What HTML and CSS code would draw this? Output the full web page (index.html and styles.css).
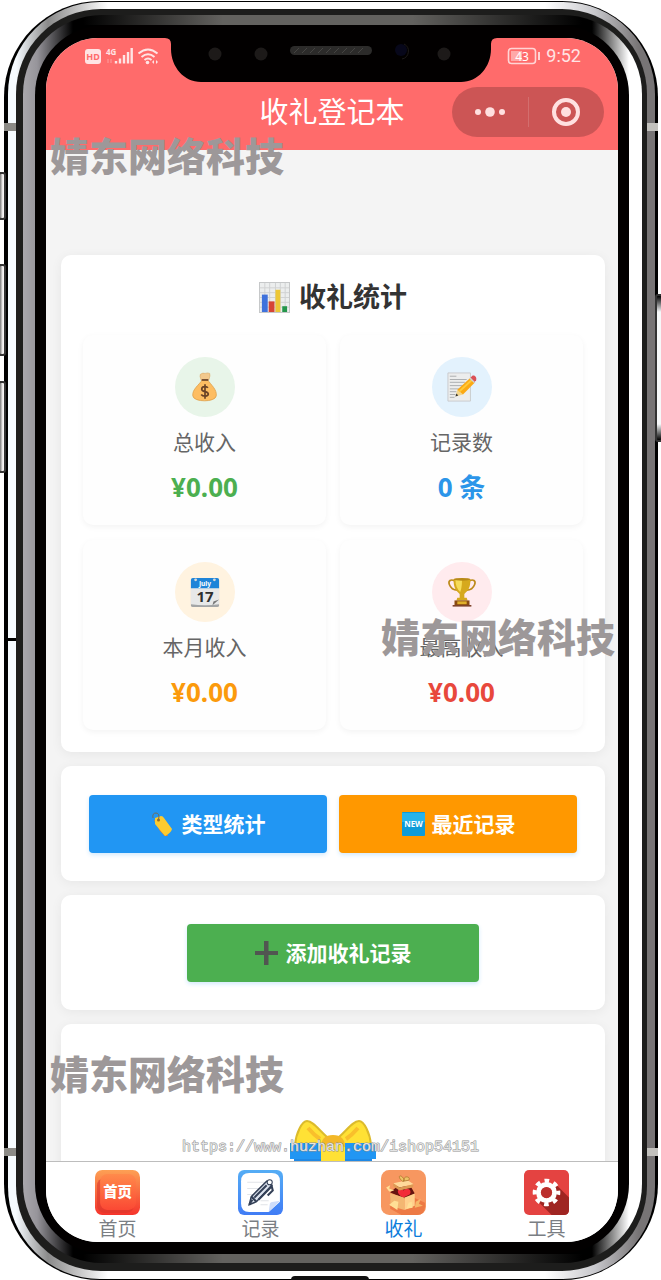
FILE: index.html
```
<!DOCTYPE html>
<html lang="zh-CN">
<head>
<meta charset="UTF-8">
<meta name="viewport" content="width=device-width, initial-scale=1">
<title>收礼登记本</title>
<link rel="stylesheet" href="styles.css">
</head>
<body>
<div class="stage">
  <div class="phone">
  <div class="rim">
  <div class="rim-dark">
  <div class="glass">
  <div class="bezel">
    <div class="screen">
      <header class="header">
        <div class="status">
          <svg class="status-left" viewBox="0 0 76 18">
            <rect x="1" y="2" width="16" height="15" rx="3" fill="#ffe4e4"/>
            <text x="9" y="13" font-size="9" font-weight="700" text-anchor="middle" fill="#ff6b6b">HD</text>
            <text x="22" y="8" font-size="8" font-weight="700" fill="#ffe4e4">4G</text>
            <path d="M24 12v4M27 12v4" stroke="#ffa0a0"/>
            <path d="M32 14v2.500M36 11.500v5M40 8v8.500M44 5v11.500M47.700 1v15.500" stroke="#ffe4e4" stroke-width="2.400"/>
            <path d="M54.500 6.500q9.500-8 19 0M57.500 10q6.500-5.500 13 0M60.500 13q3.500-3 7 0" fill="none" stroke="#ffe4e4" stroke-width="2"/>
            <circle cx="63.500" cy="15.500" r="1.800" fill="#ffe4e4"/>
            <path d="M68 15l2-2v4zM74 15l-2-2v4z" fill="#ffe4e4"/>
          </svg>
          <div class="status-right">
            <svg class="battery" viewBox="0 0 34 18">
              <rect x="1.500" y="1.500" width="27" height="15" rx="3" fill="none" stroke="#ffd5d5" stroke-width="1.600"/>
              <rect x="4" y="4" width="11" height="10" fill="#ffa8a8"/>
              <text x="15" y="13.500" font-size="12" text-anchor="middle" fill="#fff">43</text>
              <path d="M32 5v8" stroke="#ffd5d5" stroke-width="2"/>
            </svg>
            <span class="time">9:52</span>
          </div>
        </div>
        <div class="nav">
          <h1 class="nav-title">收礼登记本</h1>
          <div class="capsule">
            <button class="capsule-btn" aria-label="更多">
              <svg viewBox="0 0 32 12" width="32" height="12"><g fill="#ffe0e0"><circle cx="4" cy="6" r="3"/><circle cx="16" cy="6" r="4.800"/><circle cx="28" cy="6" r="3"/></g></svg>
            </button>
            <button class="capsule-btn" aria-label="关闭">
              <svg viewBox="0 0 30 30" width="30" height="30"><circle cx="15" cy="15" r="12" fill="none" stroke="#ffe0e0" stroke-width="4"/><circle cx="15" cy="15" r="5" fill="#ffe0e0"/></svg>
            </button>
          </div>
        </div>
      </header>
      <svg class="notch" viewBox="0 0 332 44">
        <path d="M0 0Q6 0 6 6v5c0 18 13 33 30 33h260c17 0 30-15 30-33V6q0-6 6-6z" fill="#020000"/>
        <g fill="#1d1a19"><circle cx="50" cy="16" r="6.500"/><circle cx="96" cy="16" r="6.500"/><circle cx="279" cy="16" r="6.500"/></g>
        <rect x="125" y="8" width="82" height="9" rx="4.500" fill="#2c2b2a"/>
        <path d="M129 15l5-5M137 15l5-5M145 15l5-5M153 15l5-5M161 15l5-5M169 15l5-5M177 15l5-5M185 15l5-5M193 15l5-5" stroke="#454442"/>
        <path d="M239 6a8 8 0 0 1-2 15" stroke="#1d1a19" fill="none"/>
        <circle cx="236" cy="12" r="6" fill="#07071a"/>
      </svg>

      <main class="main">
        <section class="card card-stats">
          <h2 class="card-title">
            <svg class="title-icon" viewBox="0 0 32 32">
              <rect x=".5" y=".5" width="31" height="31" fill="#eceeee" stroke="#c5c7c8"/>
              <path d="M1 6h30M1 11h30M1 16h30M1 21h30M1 26h30M6 1v30M11 1v30M17 1v30M22 1v30M27 1v30" stroke="#cfd2d3"/>
              <path d="M3 13h6v18H3z" fill="#3f72dc"/>
              <path d="M10 20h6v11h-6z" fill="#d64535"/>
              <path d="M17 8h5v23h-5z" fill="#edc735"/>
              <path d="M24 25h5v6h-5z" fill="#24964b"/>
            </svg>
            收礼统计
          </h2>
          <div class="stats">
            <div class="stat green">
              <div class="stat-icon">
                <svg viewBox="0 0 32 32">
                  <path d="M12 9Q10 4 11 2.500q3-2 5-1 3-1 5 0 1 2-1 7z" fill="#f3c98d" stroke="#d9a561" stroke-width=".6"/>
                  <path d="M13 8.500h6c3 5 10 10 9 17-1 7-24 7-25 0-1-7 7-12 10-17z" fill="#fdbd62" stroke="#dc9d48" stroke-width=".8"/>
                  <path d="M12.500 8.500h7" stroke="#69442c" stroke-width="1.800"/>
                  <path d="M19 17c-1-2-6.500-2-6.500 1.300 0 3.200 7 2 7 5.200 0 2.800-6 2.800-7.500.5M16 13v15.500" fill="none" stroke="#6b4327" stroke-width="1.800"/>
                </svg>
              </div>
              <div class="stat-label">总收入</div>
              <div class="stat-value">¥0.00</div>
            </div>
            <div class="stat blue">
              <div class="stat-icon">
                <svg viewBox="0 0 32 32">
                  <path d="M1 1h24v30H1z" fill="#eceded" stroke="#c9cbcc"/>
                  <path d="M3 4.500h7M3 8h18M3 11h16M3 14.500h14M3 18h12M3 21h7M3 24h6M3 27h5" stroke="#a9acae"/>
                  <path d="M9 26l2-7 6 5z" fill="#f3d68c"/>
                  <path d="M9 26l1-3 2 2z" fill="#333"/>
                  <path d="M11 19L25 6l5 5-13 13z" fill="#fba914"/>
                  <path d="M13 21L27 8" stroke="#ffca3a" stroke-width="2"/>
                  <path d="M25 6l2-2c3-1 5 2 4 5l-2 2z" fill="#db5157"/>
                  <path d="M24.500 6.500l5 5" stroke="#cfd2d4" stroke-width="1.500"/>
                </svg>
              </div>
              <div class="stat-label">记录数</div>
              <div class="stat-value">0 条</div>
            </div>
            <div class="stat orange">
              <div class="stat-icon">
                <svg viewBox="0 0 32 32">
                  <rect x="1" y="2" width="30" height="30" rx="2" fill="#a3a5a6"/>
                  <path d="M1 11h30v18q-15 2-30 0z" fill="#e7e8e8"/>
                  <path d="M1 12V3q0-2 2-2h26q2 0 2 2v9z" fill="#1e84d8"/>
                  <circle cx="6" cy="3" r="1.500" fill="#d5d9db"/><circle cx="26" cy="3" r="1.500" fill="#d5d9db"/>
                  <text x="16" y="9.500" font-size="7" font-weight="700" text-anchor="middle" fill="#fff">July</text>
                  <text x="16" y="27" font-size="16" font-weight="700" text-anchor="middle" fill="#2f2f2f">17</text>
                  <path d="M24 30l1-4 6-2z" fill="#777"/>
                </svg>
              </div>
              <div class="stat-label">本月收入</div>
              <div class="stat-value">¥0.00</div>
            </div>
            <div class="stat red">
              <div class="stat-icon">
                <svg viewBox="0 0 32 32">
                  <path d="M8 4C4 2 1 4 2.500 8s5 6 8.500 6M24 4c4-2 7 0 5.500 4s-5 6-8.500 6" fill="none" stroke="#bd8b1b" stroke-width="1.800"/>
                  <path d="M7 2h18c0 9-2 12-6.500 16v4h2.500l1 3H10l1-3h2.500v-4C9 14 7 11 7 2z" fill="#d6a91d"/>
                  <path d="M9 3h7c0 7-1 11-2 13-3-3-5-7-5-13z" fill="#f6dc58"/>
                  <ellipse cx="16" cy="2.500" rx="9" ry="1.500" fill="#b88a17"/>
                  <path d="M8 25h16v5H8z" fill="#8a4a12"/>
                  <path d="M11 26h10v3H11z" fill="#e0b02b"/>
                  <path d="M6 30h20v1.500H6z" fill="#6d2d10"/>
                </svg>
              </div>
              <div class="stat-label">最高收入</div>
              <div class="stat-value">¥0.00</div>
            </div>
          </div>
        </section>

        <section class="card card-actions">
          <button class="btn btn-blue">
            <svg class="btn-icon" viewBox="0 0 24 24">
              <path d="M3 8l6 11 5 5h3l-8-14z" fill="#f07c1c"/>
              <path d="M4 6l6-2q2 0 3 2l8 11q-1 4-7 7L4 12z" fill="#fccb2f"/>
              <circle cx="7.500" cy="8" r="1.500" fill="#9a6a1c"/>
              <path d="M7.500 8Q9 1 5 1T2 6" fill="none" stroke="#6e6d5c"/>
            </svg>
            类型统计
          </button>
          <button class="btn btn-orange">
            <svg class="btn-icon" viewBox="0 0 24 24">
              <rect x="1" width="23" height="24" rx="1" fill="#0d9bd8"/>
              <path d="M1 1h23v9H1z" fill="#27b3ea"/>
              <text x="12.500" y="15" font-size="8" font-weight="700" text-anchor="middle" fill="#fff">NEW</text>
            </svg>
            最近记录
          </button>
        </section>

        <section class="card card-add">
          <button class="btn btn-green">
            <svg class="btn-icon" viewBox="0 0 24 24"><path d="M10 0h4.500v10H24v4h-9.500v10H10V14H1v-4h9z" fill="#515651"/></svg>
            添加收礼记录
          </button>
        </section>

        <section class="card card-empty">
          <svg class="gift" viewBox="0 0 90 90">
            <g fill="#ffe135" stroke="#dcbb2c" stroke-width="2">
              <path d="M7 26C8 14 14 2 19 2c6 0 12 9 20 16v8z"/>
              <path d="M83 26C82 14 76 2 71 2c-6 0-12 9-20 16v8z"/>
            </g>
            <path d="M20 9q6 7 12 11M70 9q-6 7-12 11" fill="none" stroke="#f9bf2b" stroke-width="4"/>
            <path d="M2 24h86v16H2z" fill="#2196f3"/>
            <path d="M6 40h78v48H6z" fill="#1e88e5"/>
            <path d="M33 24h24v64H33z" fill="#ffe135"/>
            <path d="M33 28q0-12 12-12t12 12q-12-6-24 0z" fill="#f3b828"/>
          </svg>
        </section>
      </main>

      <nav class="tabbar">
        <a class="tab" href="#home">
          <svg class="tab-icon" viewBox="0 0 44 44">
            <defs>
              <linearGradient id="gh" x2="0" y2="1"><stop stop-color="#fda054"/><stop offset="1" stop-color="#f5342c"/></linearGradient>
              <linearGradient id="gi" x2="0" y2="1"><stop stop-color="#ff8a4b"/><stop offset="1" stop-color="#fb4934"/></linearGradient>
            </defs>
            <rect width="44" height="44" rx="7" fill="url(#gh)"/>
            <rect x="2" y="8" width="36" height="34" rx="7" fill="#d8362b" opacity=".6"/>
            <rect x="5" y="4" width="35" height="35" rx="7" fill="url(#gi)"/>
            <text class="tab-glyph" x="22" y="26" font-size="14" text-anchor="middle" fill="#fff">首页</text>
          </svg>
          首页
        </a>
        <a class="tab" href="#records">
          <svg class="tab-icon" viewBox="0 0 44 44">
            <defs><linearGradient id="gr" x2="0" y2="1"><stop stop-color="#55adf5"/><stop offset="1" stop-color="#407cf5"/></linearGradient></defs>
            <rect width="44" height="44" rx="6" fill="url(#gr)"/>
            <path d="M11 3h22q8 0 8 8v20L30 41H11q-8 0-8-8V11q0-8 8-8z" fill="#fff"/>
            <path d="M41 30L30 41l1-7q0-3 4-3z" fill="#cddcfa"/>
            <path d="M9 12h18M9 18h12M9 24h7M22 30h8M22 34h7" stroke="#e1e4e8"/>
            <path d="M11 34l2-8 15-15 5 4-15 16z" fill="#dce3ee" stroke="#344057" stroke-width="1.500"/>
            <path d="M16 27l12-12M11 34l3-5M13 26l5 5M20 29l13-13 1 4-5 5" fill="none" stroke="#344057" stroke-width="2"/>
            <circle cx="31" cy="12" r="2.500" fill="#fff" stroke="#344057"/>
          </svg>
          记录
        </a>
        <a class="tab active" href="#gifts">
          <svg class="tab-icon" viewBox="0 0 44 44">
            <rect width="44" height="44" rx="8" fill="#f79760"/>
            <path d="M9 27h23l11 5v4q0 8-8 8H20L9 38z" fill="#ed7a45"/>
            <path d="M9 22l7-6h13l4 7-9 5z" fill="#66140f"/>
            <path d="M9 23l14 4v12L9 35z" fill="#f3b772"/>
            <path d="M23 27l10-4v12l-10 4z" fill="#ffd08d"/>
            <path d="M22 27c-8-4-6-9-2-9l2 2c4-4 9 0 6 4z" fill="#f22b38"/>
            <path d="M12 13l14-3 6 4-14 3z" fill="#ffd99a"/>
            <path d="M12 13l6 4 14-3-1 3-13 3-6-4z" fill="#dd9a54"/>
            <path d="M21 11c-5-4-3-7 0-4s2 4 0 4zM22 11c0-7 8-4 5-1z" fill="#eec367" stroke="#a86e28" stroke-width=".7"/>
            <path d="M5 17l4-2-1 3 5 2-5 1zM8 34l5-4 4 1-1 8zM25 38l2-6 3-1 1 6z" fill="#ffdf95"/>
            <path d="M34 31l5-3-2 5 4 2-8 2z" fill="#f7b86a"/>
          </svg>
          收礼
        </a>
        <a class="tab" href="#tools">
          <svg class="tab-icon" viewBox="0 0 44 44">
            <rect width="44" height="44" rx="5" fill="#e44341"/>
            <path d="M31 14l13 13v12q0 5-5 5H27L14 31z" fill="#9f2522"/>
            <circle cx="22" cy="22" r="7.700" fill="#e44341" stroke="#fff" stroke-width="5"/>
            <circle cx="22" cy="22" r="11.500" fill="none" stroke="#fff" stroke-width="4" stroke-dasharray="4.500 4.530" stroke-dashoffset="2.250"/>
            <circle cx="22" cy="22" r="5.500" fill="#bb302d"/>
          </svg>
          工具
        </a>
      </nav>
    </div>
  </div>
  </div>
  </div>
  </div>
  </div>

  <span class="antenna antenna-left antenna-top"></span>
  <span class="antenna antenna-right antenna-top"></span>
  <span class="antenna antenna-left antenna-bottom"></span>
  <span class="antenna antenna-right antenna-bottom"></span>
  <span class="seam"></span>
  <span class="key key-mute"></span>
  <span class="key key-up"></span>
  <span class="key key-down"></span>
  <span class="key key-power"></span>
  <span class="foot"></span>

  <div class="mark mark-1">婧东网络科技</div>
  <div class="mark mark-2">婧东网络科技</div>
  <div class="mark mark-3">婧东网络科技</div>
  <div class="mark-url">https://www.huzhan.com/ishop54151</div>
</div>
</body>
</html>
```
FILE: styles.css
```
* { box-sizing: border-box; }
body { margin: 0; background: #fff; font-family: "Noto Sans", "Noto Sans CJK SC", sans-serif; color: #333; }
h1, h2 { margin: 0; }
button { border: none; font-family: inherit; cursor: pointer; }
svg { display: block; flex: none; }

/* phone body, from the outside in */
.stage { position: relative; height: 100vh; overflow: hidden; padding: 1px 3px 0 4px; }
.phone { height: 100%; padding: 1px 3px 1px 4px; border-radius: 96px; background: #000; }
.rim { height: 100%; padding: 7px 8px 8px 8px; border-radius: 92px; background: linear-gradient(to right, #f6fbff 0, #f6fbff 8px, #8a8a8a 40px, #fff 100px, #fff calc(100% - 110px), #c8c8cc calc(100% - 60px), #777475 calc(100% - 16px)); }
.rim-dark { height: 100%; padding: 6px 5px 8px 7px; border-radius: 85px; background: #1d1d1c; }
.glass {
  height: 100%; padding: 10px 13px 9px 12px; border-radius: 79px;
  background:
    linear-gradient(to right, transparent, #63625f 28%, #63625f 66%, transparent) center top / calc(100% - 120px) 10px no-repeat,
    linear-gradient(to right, transparent, #63625f 28%, #63625f 66%, transparent) center bottom / calc(100% - 120px) 9px no-repeat,
    linear-gradient(to right, #a9a7ac 0, #97959b 14px, #000 50px, #000 calc(100% - 50px), #fff calc(100% - 13px));
}
.bezel { height: 100%; padding: 13px 11px 12px 11px; border-radius: 70px; background: #020000; }
.screen { position: relative; display: flex; flex-direction: column; height: 100%; overflow: hidden; border-radius: 52px; background: #f4f4f4; }

.header { height: 112px; flex: none; background: #ff6b6b; color: #fff; }
.status { display: flex; justify-content: space-between; align-items: center; height: 36px; padding: 0 37px 0 38px; }
.status-left { width: 76px; height: 18px; }
.status-right { display: flex; align-items: center; gap: 5px; }
.battery { width: 34px; height: 18px; }
.time { font-family: Roboto, sans-serif; font-size: 18px; line-height: 20px; color: #ffe4e4; }
.nav { display: grid; grid-template-columns: 1fr auto 1fr; align-items: center; height: 76px; padding: 0 14px; }
.nav-title { grid-column: 2; font-size: 29px; line-height: 40px; font-weight: 400; }
.capsule { justify-self: end; display: flex; align-items: center; width: 152px; height: 50px; border-radius: 25px; background: rgba(0, 0, 0, 0.2); }
.capsule-btn { display: flex; justify-content: center; align-items: center; flex: 1; height: 30px; padding: 0; background: none; }
.capsule-btn + .capsule-btn { border-left: 1px solid rgba(255, 255, 255, 0.15); }
.notch { position: absolute; top: 0; left: 50%; width: 332px; height: 44px; margin-left: -167px; }

.main { flex: 1; min-height: 0; overflow: hidden; display: flex; flex-direction: column; gap: 14px; padding: 105px 13px 0 15px; }
.card { flex: none; border-radius: 10px; background: #fff; box-shadow: 0 2px 12px rgba(0, 0, 0, 0.06); }
.card-stats { padding: 22px; }
.card-title { display: flex; justify-content: center; align-items: center; gap: 9px; height: 40px; margin-bottom: 18px; font-size: 27px; line-height: 40px; font-weight: 700; }
.title-icon { width: 31px; height: 31px; }
.stats { display: grid; grid-template-columns: 1fr 1fr; gap: 15px 14px; }
.stat { display: flex; flex-direction: column; align-items: center; padding: 22px 0 20px; border-radius: 10px; background: #fefefe; box-shadow: 0 2px 6px rgba(0, 0, 0, 0.05); }
.stat-icon { display: flex; justify-content: center; align-items: center; width: 60px; height: 60px; border-radius: 50%; }
.stat-icon svg { width: 30px; height: 30px; }
.stat-label { margin: 12px 0 14px; font-size: 21px; line-height: 26px; color: #666; }
.stat-value { font-size: 26px; line-height: 36px; font-weight: 700; }
.green .stat-icon { background: #e8f5e9; }
.green .stat-value { color: #4caf50; }
.blue .stat-icon { background: #e3f2fd; }
.blue .stat-value { color: #2b95e9; }
.orange .stat-icon { background: #fff3e0; }
.orange .stat-value { color: #fb9a0c; }
.red .stat-icon { background: #ffebee; }
.red .stat-value { color: #e8483c; }

.card-actions { display: flex; gap: 12px; padding: 29px 28px 28px; }
.card-add { display: flex; justify-content: center; padding: 29px 28px 28px; }
.btn { display: flex; justify-content: center; align-items: center; gap: 7px; flex: 1; height: 58px; padding: 0; border-radius: 4px; color: #fff; font-size: 21px; line-height: 30px; font-weight: 700; box-shadow: 0 2px 4px rgba(33, 150, 243, 0.2); }
.btn-icon { width: 24px; height: 24px; }
.btn-blue { background: #2196f3; }
.btn-orange { background: #ff9800; }
.btn-green { flex: none; width: 60%; background: #4caf50; }
.card-empty { padding: 95px 20px; }
.gift { width: 90px; height: 90px; margin: 0 auto; }

.tabbar { display: flex; flex: none; height: 81px; padding-top: 8px; border-top: 1px solid #bdbdbd; background: #fff; }
.tab { flex: 1; display: flex; flex-direction: column; align-items: center; gap: 2px; font-size: 19px; line-height: 25px; color: #7a7e83; text-decoration: none; }
.tab.active { color: #0b7cdb; }
.tab-icon { width: 45px; height: 45px; }
.tab-glyph { font-weight: 900; }

/* hardware details on the edges */
.antenna { position: absolute; height: 8px; }
.antenna-left { left: 4px; width: 12px; background: #8b8a86; }
.antenna-right { right: 3px; width: 11px; background: #c2c1bd; }
.antenna-top { top: 123px; }
.antenna-bottom { bottom: 124px; }
.seam { position: absolute; left: 6px; top: 50%; width: 10px; height: 3px; margin-top: -2px; background: #000; }
.key { position: absolute; left: -2px; width: 8px; border: 2px solid #333; border-radius: 3px; background: linear-gradient(to right, #777, #f7f5f5 70%); }
.key-mute { top: 172px; height: 48px; }
.key-up { top: 264px; height: 92px; }
.key-down { top: 381px; height: 92px; }
.key-power { left: auto; right: -2px; top: 294px; height: 148px; background: linear-gradient(#000, #f6f8f9 16px, #f6f8f9 calc(100% - 16px), #000); }
.foot { position: absolute; left: 50%; bottom: 0; width: 78px; height: 4px; margin-left: -40px; border-radius: 8px 8px 0 0; background: #111; }

.mark { position: absolute; font-family: "Noto Sans CJK SC", sans-serif; font-size: 39px; line-height: 46px; font-weight: 900; color: #9d9899; white-space: nowrap; pointer-events: none; }
.mark-1 { left: 50px; top: 131px; }
.mark-2 { right: 46px; top: 612px; }
.mark-3 { left: 50px; bottom: 185px; }
.mark-url { position: absolute; left: 0; right: 0; bottom: 122px; text-align: center; font-family: "Liberation Mono", monospace; font-size: 15px; line-height: 20px; color: #e4e4e4; -webkit-text-stroke: 1px #8f8f8f; paint-order: stroke fill; pointer-events: none; }
```
